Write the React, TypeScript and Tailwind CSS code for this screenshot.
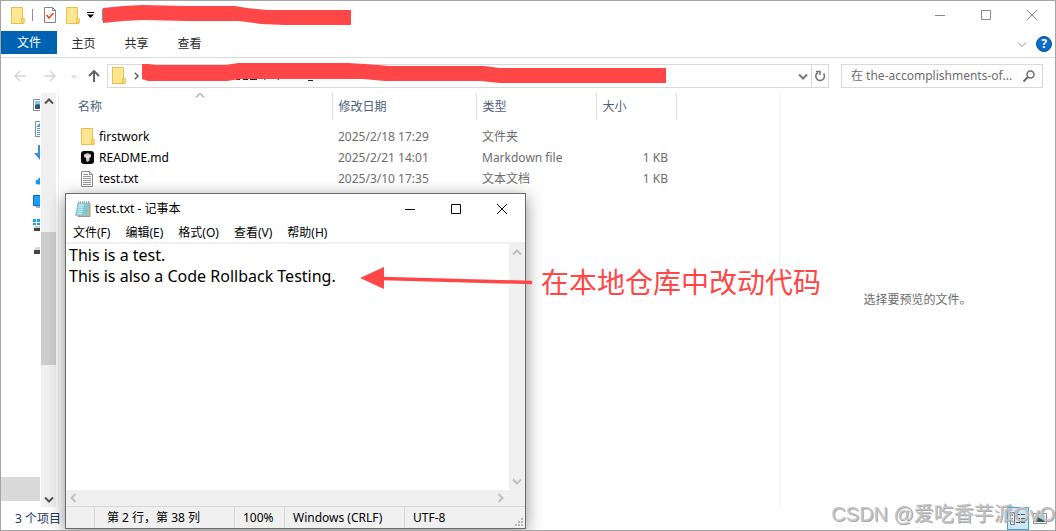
import type { ReactNode } from "react";

const files = [
  { name: "firstwork", date: "2025/2/18 17:29", type: "文件夹", size: "", icon: <FolderIcon /> },
  { name: "README.md", date: "2025/2/21 14:01", type: "Markdown file", size: "1 KB", icon: <MarkdownIcon /> },
  { name: "test.txt", date: "2025/3/10 17:35", type: "文本文档", size: "1 KB", icon: <TextFileIcon /> },
];

const menus = ["文件(F)", "编辑(E)", "格式(O)", "查看(V)", "帮助(H)"];

function FolderIcon() {
  return (
    <svg width="14" height="17" viewBox="0 0 14 17" className="shrink-0" aria-hidden="true">
      <path d="M.5.5h11v11h1.500v5H.5z" fill="#ffe693" stroke="#eac04c" />
      <path d="M10.500 16v-4.500h2.500V16z" fill="#ffdf7c" stroke="#eac04c" />
    </svg>
  );
}

function MarkdownIcon() {
  return (
    <svg width="13" height="13" viewBox="0 0 13 13" className="shrink-0" aria-hidden="true">
      <rect width="13" height="13" rx="3" fill="#0a0a0a" />
      <path d="M3 3.500L6.500 2 10 3.500V6L8.500 7v2.500L6.500 11 5 9.500V7L3 6z" fill="#c4c4c4" />
      <path d="M3.500 4l3 1 3-1L7 8z" fill="#f2f2f2" />
    </svg>
  );
}

function TextFileIcon() {
  return (
    <svg width="12" height="16" viewBox="0 0 12 16" className="shrink-0" aria-hidden="true">
      <path d="M.5.5h8l3 3v12H.5z" fill="#fff" stroke="#8c8c8c" />
      <path d="M8.500.5v3h3" fill="none" stroke="#8c8c8c" />
      <path d="M2 3.500h5M2 5.500h8M2 7.500h8M2 9.500h8M2 11.500h8M2 13.500h8" stroke="#9a9a9a" />
    </svg>
  );
}

function CheckFileIcon() {
  return (
    <svg width="12" height="16" viewBox="0 0 12 16" aria-hidden="true">
      <path d="M.5.5h8l3 3v12H.5z" fill="#fff" stroke="#858585" />
      <path d="M8.500.5v3h3" fill="none" stroke="#858585" />
      <path d="M2.500 8l2.500 3 4.500-5" fill="none" stroke="#e8531f" strokeWidth="1.800" />
    </svg>
  );
}

function NotepadIcon() {
  return (
    <svg width="16" height="16" viewBox="0 0 16 16" aria-hidden="true">
      <path d="M13 2h2v13.500H3z" fill="#c9b795" stroke="#8a7b60" strokeWidth=".7" />
      <path d="M3 2h11l-2 12.500H.5z" fill="#83c9dc" stroke="#8fb9c4" strokeWidth=".7" />
      <path d="M4 3h5L7 13.500H2z" fill="#b9e6ef" />
      <path d="M3.500 5.500h9M3 7.500h9M3 9.500h9M2.500 11.500h9" stroke="#79c0d2" strokeWidth=".5" />
      <path d="M3 1h11" stroke="#666" strokeDasharray="1 1" />
    </svg>
  );
}

type Dir = "up" | "down" | "left" | "right";

const chevrons: Record<Dir, string> = {
  up: "M1 6.500L5 2.500l4 4",
  down: "M1 3.500l4 4 4-4",
  left: "M6.500 1l-4 4 4 4",
  right: "M3.500 1l4 4-4 4",
};

function Chevron({ dir, color, weight = 2, size = 10 }: { dir: Dir; color: string; weight?: number; size?: number }) {
  return (
    <svg width={size} height={size} viewBox="0 0 10 10" aria-hidden="true">
      <path d={chevrons[dir]} fill="none" stroke={color} strokeWidth={weight} />
    </svg>
  );
}

function NavButton({ label, width, children }: { label: string; width: string; children: ReactNode }) {
  return (
    <button aria-label={label} className={`flex h-6 shrink-0 items-center justify-center ${width}`}>
      {children}
    </button>
  );
}

function WindowButtons({ color }: { color: string }) {
  const shapes = [
    { label: "最小化", d: "M0 5.500h10" },
    { label: "最大化", d: "M.5.5h9v9h-9z" },
    { label: "关闭", d: "M0 0l10 10M10 0L0 10" },
  ];
  return (
    <div className="flex">
      {shapes.map((s) => (
        <button key={s.label} aria-label={s.label} className="flex h-7 w-[46px] items-center justify-center">
          <svg width="10" height="10" viewBox="0 0 10 10" aria-hidden="true">
            <path d={s.d} fill="none" stroke={color} />
          </svg>
        </button>
      ))}
    </div>
  );
}

function TitleBar() {
  return (
    <header className="flex h-7 shrink-0 items-center justify-between">
      <div className="flex items-center pl-[10px]">
        <FolderIcon />
        <span className="ml-[7px] h-3 w-px bg-[#909090]" />
        <button aria-label="属性" className="ml-[11px]">
          <CheckFileIcon />
        </button>
        <button aria-label="新建文件夹" className="ml-[10px]">
          <FolderIcon />
        </button>
        <button aria-label="自定义快速访问工具栏" className="ml-[7px]">
          <svg width="7" height="6" viewBox="0 0 7 6" aria-hidden="true">
            <path d="M0 .5h7" stroke="#000" />
            <path d="M0 2.500h7L3.500 6z" fill="#000" />
          </svg>
        </button>
        <span className="ml-2 h-3 w-px bg-[#909090]" />
      </div>
      <WindowButtons color="#8a8a8a" />
    </header>
  );
}

function RibbonTabs() {
  return (
    <nav className="flex h-[29px] shrink-0 items-start border-b border-[#dadada] pt-[2px] text-[#2b2b2b]">
      <button className="h-[23px] w-14 bg-[#0063b1] text-white">文件</button>
      <button className="h-[25px] w-[53px]">主页</button>
      <button className="h-[25px] w-[53px]">共享</button>
      <button className="h-[25px] w-[53px]">查看</button>
      <div className="ml-auto flex h-[25px] items-center gap-[9px] pr-[3px]">
        <button aria-label="展开功能区">
          <Chevron dir="down" color="#8f8f8f" weight={1} />
        </button>
        <button
          aria-label="帮助"
          className="flex size-4 items-center justify-center rounded-full border border-[#0a4d8c] bg-[#0a6cce] font-bold text-white"
        >
          ?
        </button>
      </div>
    </nav>
  );
}

function AddressRow() {
  return (
    <div className="flex h-[35px] shrink-0 items-center pr-3 pl-[7px]">
      <NavButton label="后退" width="w-6">
        <svg width="12" height="12" viewBox="0 0 12 12" aria-hidden="true">
          <path d="M12 6H1M6 1L1 6l5 5" fill="none" stroke="#d5d5d5" strokeWidth="1.500" />
        </svg>
      </NavButton>
      <NavButton label="前进" width="w-9">
        <svg width="12" height="12" viewBox="0 0 12 12" aria-hidden="true">
          <path d="M0 6h11M6 1l5 5-5 5" fill="none" stroke="#d5d5d5" strokeWidth="1.500" />
        </svg>
      </NavButton>
      <NavButton label="最近浏览的位置" width="w-3">
        <Chevron dir="down" color="#d0d0d0" weight={2} size={6} />
      </NavButton>
      <NavButton label="上移" width="w-[27px]">
        <svg width="12" height="12" viewBox="0 0 12 12" aria-hidden="true">
          <path d="M6 12V1M1 6l5-5 5 5" fill="none" stroke="#666" strokeWidth="2" />
        </svg>
      </NavButton>
      <div className="flex h-6 min-w-0 flex-1 items-center border border-[#d9d9d9] pl-1">
        <FolderIcon />
        <span className="ml-[6px]">
          <Chevron dir="right" color="#666" size={8} />
        </span>
        <button aria-label="以前的位置" className="ml-auto flex h-full w-4 items-center justify-center">
          <Chevron dir="down" color="#777" />
        </button>
        <button
          aria-label="刷新"
          className="flex h-full w-[17px] items-center justify-center border-l border-[#d9d9d9]"
        >
          <svg width="11" height="12" viewBox="0 0 11 12" aria-hidden="true">
            <path d="M3 2.500A4.300 4.300 0 1 0 8.500 3.500" fill="none" stroke="#777" strokeWidth="1.600" />
            <path d="M1 1.500h4V5" fill="none" stroke="#777" strokeWidth="1.500" />
          </svg>
        </button>
      </div>
      <label className="ml-3 flex h-6 w-[202px] items-center border border-[#d9d9d9] pr-[7px] pl-[9px]">
        <input
          aria-label="搜索"
          placeholder="在 the-accomplishments-of..."
          className="min-w-0 flex-1 outline-none placeholder:text-[#6d6d6d]"
        />
        <svg width="12" height="12" viewBox="0 0 12 12" aria-hidden="true">
          <circle cx="7.500" cy="4.500" r="3.500" fill="none" stroke="#6d6d6d" strokeWidth="1.500" />
          <path d="M5 7l-4.500 4.500" stroke="#6d6d6d" strokeWidth="2" />
        </svg>
      </label>
    </div>
  );
}

function Sidebar() {
  const icons = [
    <svg key="pictures" width="16" height="12" viewBox="0 0 16 12">
      <path d="M.5.5h15v11H.5z" fill="#fff" stroke="#8c8c8c" />
      <path d="M2 2h12v8H2z" fill="#8cc7f2" />
      <path d="M2 6l3-1 9 3v2H2z" fill="#35586a" />
    </svg>,
    <svg key="documents" width="14" height="16" viewBox="0 0 14 16">
      <path d="M2.500.5h11v15h-11z" fill="#fff" stroke="#8c8c8c" />
      <path d="M4 5.500l3-3v3zM4 7.500h8M4 9.500h8M4 11.500h8M4 13.500h8" fill="#2d8fdc" stroke="#4c9bd5" />
    </svg>,
    <svg key="downloads" width="14" height="16" viewBox="0 0 14 16">
      <path d="M5 0h4v8h4l-6 7-6-7h4z" fill="#3a8ee6" />
    </svg>,
    <svg key="onedrive" width="18" height="16" viewBox="0 0 18 16">
      <path d="M5 15.500a2.500 2.500 0 0 1 0-5 5 5 0 0 1 9 0 2.500 2.500 0 0 1 0 5z" fill="#159af0" />
    </svg>,
    <svg key="pc" width="16" height="13" viewBox="0 0 16 13">
      <path d="M.5.5h15v10H.5z" fill="#18a0fb" stroke="#0e6eb5" />
      <path d="M3 12h10" stroke="#0e6eb5" />
    </svg>,
    <svg key="system" width="14" height="14" viewBox="0 0 14 14">
      <path d="M0 1h3v3H0zM4 1h3v3H4zM0 5h3v2H0zM4 5h3v2H4z" fill="#15a5ee" />
      <path d="M2 8h12l1 2H1z" fill="#ccc" />
      <path d="M1 10h13v3H1z" fill="#444" />
    </svg>,
    <svg key="drive" width="14" height="12" viewBox="0 0 14 12">
      <path d="M3 4h10l1 3H1z" fill="#d5d5d5" />
      <path d="M1 7h13v4H1z" fill="#444" />
    </svg>,
  ];
  return (
    <aside className="flex shrink-0 pr-[2px]">
      <div className="flex w-10 flex-col overflow-hidden pr-px">
        {icons.map((icon) => (
          <div key={icon.key} className="flex h-6 shrink-0 items-center overflow-hidden pl-8" aria-hidden="true">
            <span className="shrink-0">{icon}</span>
          </div>
        ))}
        <div className="mt-auto mb-[6px] h-6 bg-[#d9d9d9]" />
      </div>
      <div className="flex w-[15px] flex-col bg-[#f0f0f0]">
        <button aria-label="向上滚动" className="flex h-[17px] shrink-0 items-center justify-center">
          <Chevron dir="up" color="#555" />
        </button>
        <div className="flex flex-1 flex-col">
          <div className="h-[32%]" />
          <div className="h-[35%] bg-[#cdcdcd]" />
        </div>
        <button aria-label="向下滚动" className="flex h-[17px] shrink-0 items-center justify-center">
          <Chevron dir="down" color="#555" />
        </button>
      </div>
    </aside>
  );
}

function FileList() {
  return (
    <section className="min-w-0 flex-1 border-l border-[#f2f2f2]">
      <table className="table-fixed border-collapse text-left">
        <colgroup>
          <col className="w-[273px]" />
          <col className="w-36" />
          <col className="w-[120px]" />
          <col className="w-20" />
        </colgroup>
        <thead className="text-[#4c607a]">
          <tr className="h-[27px]">
            <th className="relative border-r border-[#e2e2e2] p-0 pl-[19px] font-normal">
              名称
              <span className="absolute -top-[2px] left-1/2">
                <Chevron dir="up" color="#777" weight={1} />
              </span>
            </th>
            <th className="border-r border-[#e2e2e2] p-0 pl-[6px] font-normal">修改日期</th>
            <th className="border-r border-[#e2e2e2] p-0 pl-[6px] font-normal">类型</th>
            <th className="border-r border-[#e2e2e2] p-0 pl-[6px] font-normal">大小</th>
          </tr>
        </thead>
        <tbody className="text-[#6d6d6d] before:block before:h-[6px]">
          {files.map((f) => (
            <tr key={f.name} className="h-[21px]">
              <td className="p-0 pl-[22px] text-black">
                <div className="flex items-center">
                  <span className="flex w-[18px]">{f.icon}</span>
                  {f.name}
                </div>
              </td>
              <td className="p-0 pl-[6px]">{f.date}</td>
              <td className="p-0 pl-[6px]">{f.type}</td>
              <td className="p-0 pr-2 text-right">{f.size}</td>
            </tr>
          ))}
        </tbody>
      </table>
    </section>
  );
}

function StatusBar() {
  return (
    <footer className="flex h-[23px] shrink-0 items-center justify-between pr-2 pl-[14px] text-[#1e395b]">
      <span>3 个项目</span>
      <div className="flex h-full items-center">
        <button
          aria-label="详细信息"
          className="flex h-full w-[22px] items-center justify-center border border-[#3ba5dc] bg-[#cce8f7]"
        >
          <svg width="16" height="13" viewBox="0 0 16 13" aria-hidden="true">
            <path d="M.5.5h4v12h-4z" fill="#fff" stroke="#777" />
            <path d="M2 3.500h1M2 6.500h1" stroke="#3a78b0" />
            <path d="M2 10h1" stroke="#d33" />
            <path d="M6 2.500h4M11 2.500h4M6 6.500h4M11 6.500h4M6 10.500h4M11 10.500h4" stroke="#555" />
          </svg>
        </button>
        <button aria-label="大缩略图" className="ml-1">
          <svg width="14" height="11" viewBox="0 0 14 11" aria-hidden="true">
            <path d="M.5.5h13v10H.5z" fill="#fff" stroke="#888" />
            <path d="M2 2h10v7H2z" fill="#a7d3f5" />
            <path d="M2 5l3-1 3 2 4 1v2H2z" fill="#2f5a5c" />
          </svg>
        </button>
      </div>
    </footer>
  );
}

function Notepad() {
  return (
    <section className="absolute top-48 left-16 flex h-[336px] w-[461px] flex-col border border-[#6b6b6b] bg-white text-black shadow-[0_4px_16px_rgba(0,0,0,0.45)]">
      <header className="flex h-[29px] shrink-0 items-center justify-between">
        <h1 className="flex items-center gap-1 pl-[9px]">
          <NotepadIcon />
          test.txt - 记事本
        </h1>
        <WindowButtons color="#000" />
      </header>
      <nav className="flex h-[21px] shrink-0 items-center gap-[15px] border-b-2 border-[#f0f0f0] pl-[7px]">
        {menus.map((m) => (
          <button key={m}>{m}</button>
        ))}
      </nav>
      <div className="flex min-h-0 flex-1">
        <textarea
          aria-label="test.txt"
          wrap="off"
          spellCheck={false}
          defaultValue={"This is a test.\nThis is also a Code Rollback Testing."}
          className="min-w-0 flex-1 resize-none overflow-hidden pt-px pl-[3px] text-[16px] leading-[21px] outline-none"
        />
        <div className="flex w-4 flex-col items-center justify-between bg-[#f0f0f0] py-1">
          <Chevron dir="up" color="#bfbfbf" />
          <Chevron dir="down" color="#bfbfbf" />
        </div>
      </div>
      <div className="flex h-4 shrink-0 items-center justify-between bg-[#f0f0f0] pr-5 pl-[3px]">
        <Chevron dir="left" color="#bfbfbf" />
        <Chevron dir="right" color="#bfbfbf" />
      </div>
      <footer className="flex h-[22px] shrink-0 items-stretch border-t border-[#d7d7d7] bg-[#f0f0f0] leading-[21px]">
        <span className="w-[29px] border-r border-[#d7d7d7]" />
        <span className="w-[140px] border-r border-[#d7d7d7] pl-3">第 2 行，第 38 列</span>
        <span className="w-[50px] border-r border-[#d7d7d7] pl-2">100%</span>
        <span className="w-[120px] border-r border-[#d7d7d7] pl-2">Windows (CRLF)</span>
        <span className="flex-1 pl-2">UTF-8</span>
        <svg width="8" height="8" viewBox="0 0 8 8" className="mr-[2px] mb-[2px] self-end" aria-hidden="true">
          <path d="M6 0h2v2H6zM3 3h2v2H3zM6 3h2v2H6zM0 6h2v2H0zM3 6h2v2H3zM6 6h2v2H6z" fill="#b8b8b8" />
        </svg>
      </footer>
    </section>
  );
}

function Annotations() {
  return (
    <>
      {/* marker strokes over the title and the path, plus the arrow */}
      <svg
        width="700"
        height="300"
        viewBox="1 1 700 300"
        className="pointer-events-none absolute top-0 left-0"
        aria-hidden="true"
      >
        <path d="M236 79.500h4M243 79.500h5M250 79.500h7M264 78l1 2M278 80l1-2M308 80.500h5M385 80h2" stroke="#222" fill="none" />
        <path
          d="M103 8l20-2 20-1 42 1h50l12 2 20 2h84v15h-66l-24-1-14-2-9-1h-50l-45-1-20 1-20 2z"
          fill="#ff4747"
        />
        <path
          d="M142 64h6l8 1h70l12-2h110l17 1 25 2h94l16 2h166v15H500l-20-2h-95l-22-2H240l-13 2h-79l-6-2z"
          fill="#ff4747"
        />
        <path d="M360 278l24-11v22z" fill="#ff4747" />
        <path d="M382 278.500l150 4" stroke="#ff4747" strokeWidth="3.500" />
      </svg>
      <p className="absolute top-[261px] left-[540px] text-[28px] leading-10 text-[#ff4747]">在本地仓库中改动代码</p>
      <p className="pointer-events-none absolute right-0 bottom-0 font-['Liberation_Sans','Noto_Sans_CJK_SC',sans-serif] text-[20px] leading-8 whitespace-nowrap text-[#c4c4c4] [text-shadow:1px_1px_0_#a8a8a8]">
        CSDN @爱吃香芋派OvO
      </p>
    </>
  );
}

export default function App() {
  return (
    <div className="relative flex h-screen min-h-[531px] flex-col overflow-hidden border border-[#a5a5a5] bg-white font-['Noto_Sans','Noto_Sans_CJK_SC',sans-serif] text-[12px] leading-4">
      <TitleBar />
      <RibbonTabs />
      <AddressRow />
      <main className="flex min-h-0 flex-1">
        <Sidebar />
        <FileList />
        <aside className="flex w-[276px] shrink-0 items-center justify-center border-l border-[#f2f2f2] text-[#6d6d6d]">
          选择要预览的文件。
        </aside>
      </main>
      <StatusBar />
      <Notepad />
      <Annotations />
    </div>
  );
}
